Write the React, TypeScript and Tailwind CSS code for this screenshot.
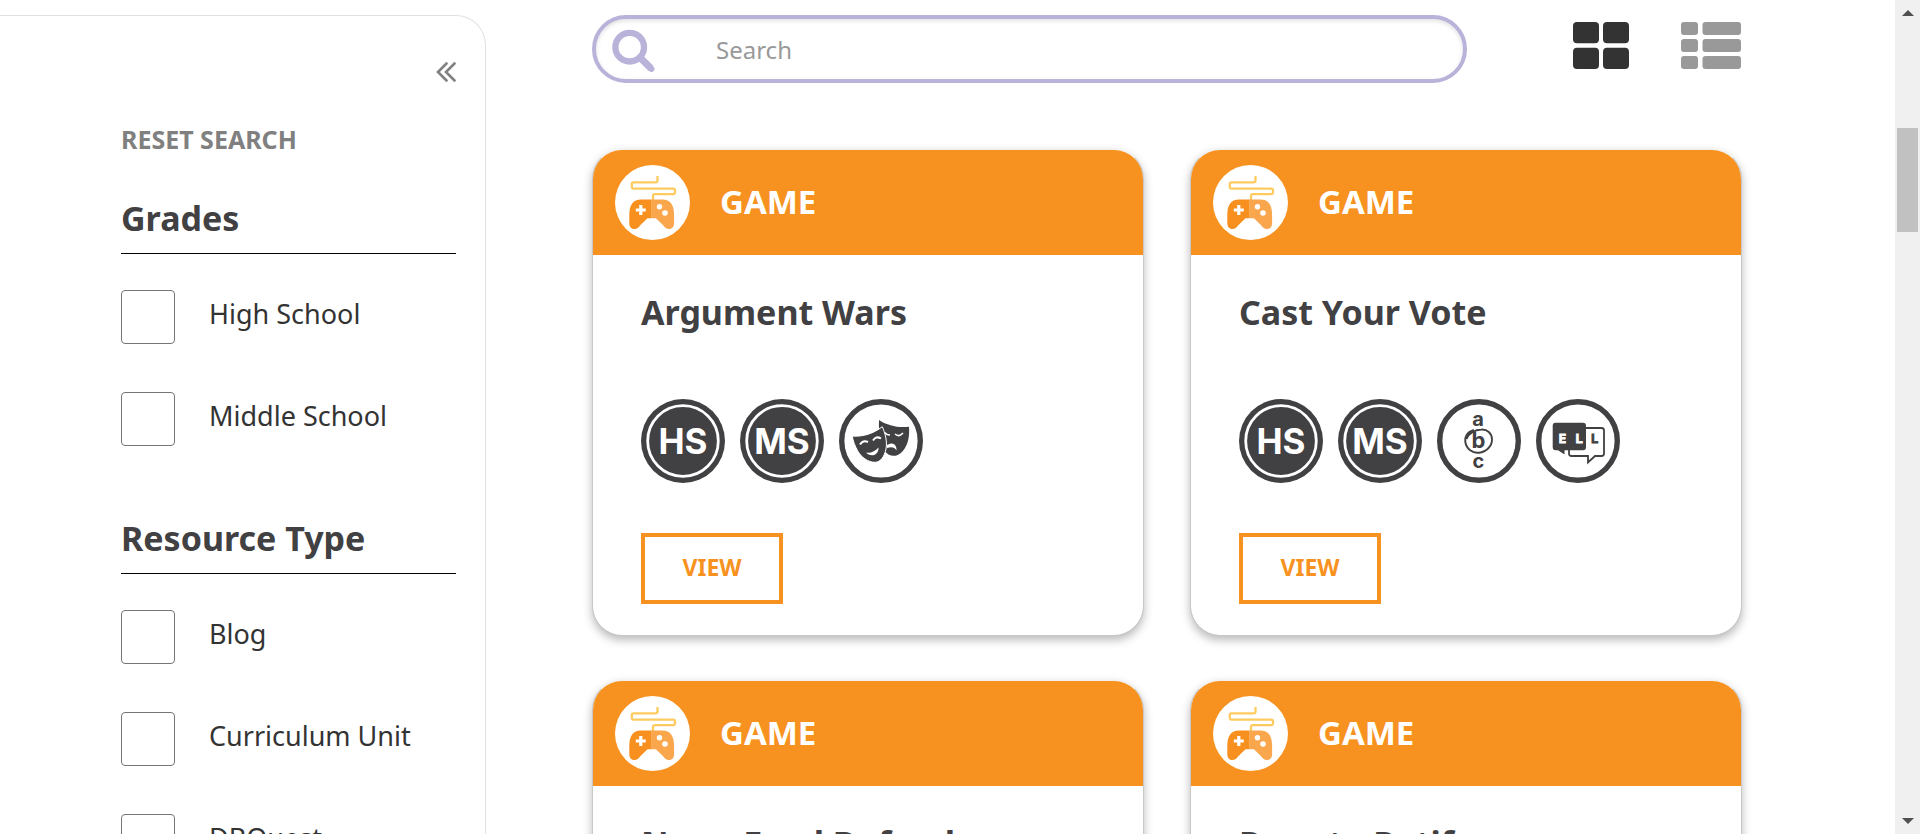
import React from "react";

const TEXT = "font-['Noto_Sans',sans-serif]";

function GameIcon() {
  return (
    <svg viewBox="0 0 75 75" className="size-[75px] shrink-0" aria-hidden="true">
      <circle cx="37.5" cy="37.5" r="37.5" fill="#fff" />
      <path
        d="M42.5 11V15.5Q42.5 17.3 40.5 17.3H18.5Q16.8 17.3 16.8 19V21.7Q16.8 23.6 18.5 23.6H58Q60 23.6 60 25.3V27.3Q60 29.2 58 29.2H40Q38 29.2 38 31V36"
        fill="none"
        stroke="#fdcb5f"
        strokeWidth="2.3"
      />
      <path
        d="M36.7 34.5H26C18 34.5 14.3 40 14.3 50V58C14.3 62.5 17 64 19.5 64C22 64 23.5 62.5 25.5 60L32.5 53.3H36.7Z"
        fill="#f7901f"
      />
      <path
        d="M36.7 34.5H47.4C55.4 34.5 59.1 40 59.1 50V58C59.1 62.5 56.4 64 53.9 64C51.4 64 49.9 62.5 47.9 60L40.9 53.3H36.7Z"
        fill="#f9a64d"
      />
      <path d="M25.8 40V50M20.8 45H30.8" stroke="#fff" strokeWidth="3.2" />
      <circle cx="44.5" cy="41.8" r="2.7" fill="#fff" />
      <circle cx="50" cy="48" r="2.8" fill="#fff" />
    </svg>
  );
}

function LevelBadge({ label }: { label: string }) {
  return (
    <svg viewBox="0 0 84 84" className="size-[84px]" role="img" aria-label={label}>
      <circle cx="42" cy="42" r="42" fill="#414042" />
      <circle cx="42" cy="42" r="35.3" fill="none" stroke="#fff" strokeWidth="2.8" />
      <text
        x="42"
        y="54.5"
        textAnchor="middle"
        fontSize="35"
        fill="#fff"
        className="font-['Inter',sans-serif] font-bold"
      >
        {label}
      </text>
    </svg>
  );
}

function Ring({ label, children }: { label: string; children: React.ReactNode }) {
  return (
    <svg viewBox="0 0 84 84" className="size-[84px]" role="img" aria-label={label}>
      <circle cx="42" cy="42" r="39.3" fill="#fff" stroke="#414042" strokeWidth="5.4" />
      {children}
    </svg>
  );
}

function DramaBadge() {
  return (
    <Ring label="Drama">
      <path
        d="M40 21C49 27 60 29 70 27.7C70.5 34 70 42 66.5 48C63.5 53.5 59 57 54.5 56.8C48 56.5 43 51 41.5 42C40.5 35 39.5 28 40 21Z"
        fill="#414042"
      />
      <path d="M46 33.5Q47 36 51 36" fill="none" stroke="#fff" strokeWidth="1.6" />
      <path d="M56 35Q60 38.5 64 34" fill="none" stroke="#fff" strokeWidth="1.6" />
      <path d="M48 46C54 42 58 46 57.5 51.5C55.5 48.5 53 47.5 48 49Z" fill="#fff" />
      <path
        d="M13.3 37C24 38 34.5 34.5 43.3 27.7C46 34 48.5 42 47 50C45.5 57.5 41.5 63.3 36 63.3C29.5 63.3 22 58.5 18.5 51.5C16 47 14 42 13.3 37Z"
        fill="#414042"
        stroke="#fff"
        strokeWidth="1"
      />
      <path d="M21 45.5Q24 40.5 29 43" fill="none" stroke="#fff" strokeWidth="2" />
      <path d="M34 41.5Q37 36.5 42 39.5" fill="none" stroke="#fff" strokeWidth="2" />
      <path d="M27 53.5C31.5 54.5 36 52.5 39.5 48.5C39.7 53 37 56.3 33 56.3C30.5 56.3 28.5 55.3 27 53.5Z" fill="#fff" />
    </Ring>
  );
}

function AbcBadge() {
  return (
    <Ring label="Vocabulary">
      <g fill="#414042" fontSize="20" textAnchor="middle" className="font-['Inter',sans-serif] font-bold">
        <text x="41" y="26.5">a</text>
        <text x="41.5" y="49" fontSize="22">b</text>
        <text x="41.5" y="69">c</text>
      </g>
      <path
        d="M37 31C30 33 27.5 38 28.3 43C29.5 50 35.5 54.5 42 53.7C49.5 53 55 47 55 40.5C55 34 50 30.2 44.5 30.5C38 30.7 31.5 34.5 29.5 40"
        fill="none"
        stroke="#414042"
        strokeWidth="1.9"
      />
    </Ring>
  );
}

function EllBadge() {
  return (
    <Ring label="English language learners">
      <path
        d="M50 29H65.5Q68 29 68 31.5V54.5Q68 57 65.5 57H59L52 63.5V57H35.5Q33 57 33 54.5V51"
        fill="none"
        stroke="#414042"
        strokeWidth="1.8"
      />
      <path
        d="M19.5 23.7H47Q50 23.7 50 26.7V48.3Q50 51.3 47 51.3H28.5V55.5L22 51.3H19.5Q16.7 51.3 16.7 48.3V26.7Q16.7 23.7 19.5 23.7Z"
        fill="#414042"
      />
      <g fontSize="13" textAnchor="middle" strokeWidth="0.8" className="font-['DejaVu_Sans_Mono',monospace] font-bold">
        <text x="26.5" y="44" fill="#fff" stroke="#fff">E</text>
        <text x="43" y="44" fill="#fff" stroke="#fff">L</text>
        <text x="58.5" y="44" fill="#414042" stroke="#414042">L</text>
      </g>
    </Ring>
  );
}

type Badge = "HS" | "MS" | "drama" | "abc" | "ell";

function BadgeIcon({ kind }: { kind: Badge }) {
  if (kind === "drama") return <DramaBadge />;
  if (kind === "abc") return <AbcBadge />;
  if (kind === "ell") return <EllBadge />;
  return <LevelBadge label={kind} />;
}

const games: { title: string; badges: Badge[] }[] = [
  { title: "Argument Wars", badges: ["HS", "MS", "drama"] },
  { title: "Cast Your Vote", badges: ["HS", "MS", "abc", "ell"] },
  { title: "News Feed Defenders", badges: ["HS", "MS"] },
  { title: "Race to Ratify", badges: ["HS", "MS"] },
];

function GameCard({ title, badges }: { title: string; badges: Badge[] }) {
  return (
    <article className="overflow-hidden rounded-[30px] border border-[#c8c8c8] border-t-transparent bg-white bg-clip-padding shadow-[0_4px_10px_rgba(0,0,0,0.28)]">
      <header className="flex h-[105px] items-center gap-[30px] bg-[#f79220] pl-[22px]">
        <GameIcon />
        <span className="pb-0.5 text-[33px] leading-[46px] font-bold text-white">GAME</span>
      </header>
      <div className="px-12 pt-8 pb-[31px]">
        <h2 className="text-[34px] leading-[50px] font-bold whitespace-nowrap text-[#414042]">{title}</h2>
        <div className="mt-[62px] flex gap-[15px]">
          {badges.map((b) => (
            <BadgeIcon key={b} kind={b} />
          ))}
        </div>
        <a
          href="#view"
          className="mt-[50px] flex h-[71px] w-[142px] items-center justify-center border-4 border-[#f79220] pb-0.5 text-[23px] font-bold text-[#f79220]"
        >
          VIEW
        </a>
      </div>
    </article>
  );
}

function FilterGroup({ title, options }: { title: string; options: string[] }) {
  return (
    <fieldset className="mb-[69px]">
      <legend className="mb-9 w-full border-b border-black pb-3 text-[34px] leading-[46px] font-bold text-[#414042]">
        {title}
      </legend>
      <div className="flex flex-col gap-12">
        {options.map((o) => (
          <label key={o} className="flex h-[54px] items-center gap-[34px] text-[27px] leading-[50px] text-[#333]">
            <input
              type="checkbox"
              className="size-[54px] shrink-0 appearance-none rounded-[4px] border border-[#767676] bg-white checked:bg-[#767676]"
            />
            <span className="pb-1.5 whitespace-nowrap">{o}</span>
          </label>
        ))}
      </div>
    </fieldset>
  );
}

function Sidebar() {
  return (
    <aside className="mt-[15px] w-[486px] shrink-0 rounded-tr-[30px] border-t border-r border-[#e1e1e1] pt-[46px] pr-[29px] pl-[121px]">
      <div className="flex justify-end">
        <button type="button" aria-label="Collapse filters">
          <svg viewBox="0 0 20 20" className="size-5" fill="none" stroke="#808080" strokeWidth="2.6" strokeLinecap="round">
            <path d="M10.5 1.5L2 10L10.5 18.5M18.5 1.5L10 10L18.5 18.5" />
          </svg>
        </button>
      </div>
      <button type="button" className="mt-[39px] block text-[25px] leading-9 font-bold text-[#808080]">
        RESET SEARCH
      </button>
      <div className="mt-[38px]">
        <FilterGroup title="Grades" options={["High School", "Middle School"]} />
        <FilterGroup title="Resource Type" options={["Blog", "Curriculum Unit", "DBQuest"]} />
      </div>
    </aside>
  );
}

function Toolbar() {
  return (
    <div className="flex items-start pr-px">
      <label className="flex h-[68px] flex-1 items-center rounded-full border-4 border-[#b9b3da] pt-0.5 pl-4 shadow-[inset_0_2px_4px_rgba(0,0,0,0.12)]">
        <svg viewBox="0 0 43 43" className="size-[43px] shrink-0" aria-hidden="true">
          <circle cx="17.7" cy="18.2" r="14.3" fill="none" stroke="#b9b3da" strokeWidth="6.3" />
          <path d="M27.5 28L39 39.5" stroke="#b9b3da" strokeWidth="7" />
          <path d="M38.5 39L39.5 40" stroke="#b9b3da" strokeWidth="6" strokeLinecap="round" />
        </svg>
        <input
          type="search"
          aria-label="Search"
          placeholder="Search"
          className="ml-[61px] min-w-0 flex-1 bg-transparent text-2xl text-[#333] outline-none placeholder:text-[#999]"
        />
      </label>
      <button type="button" aria-label="Grid view" className="mt-[7px] ml-[106px]">
        <svg viewBox="0 0 56 47" className="h-[47px] w-14" fill="#333">
          <rect width="26" height="21.3" rx="4" />
          <rect x="30" width="26" height="21.3" rx="4" />
          <rect y="25.7" width="26" height="21.3" rx="4" />
          <rect x="30" y="25.7" width="26" height="21.3" rx="4" />
        </svg>
      </button>
      <button type="button" aria-label="List view" className="mt-[7px] ml-[52px]">
        <svg viewBox="0 0 60 47" className="h-[47px] w-[60px]" fill="#999">
          <rect width="17" height="13" rx="3" />
          <rect x="21.5" width="38.5" height="13" rx="3" />
          <rect y="17" width="17" height="13" rx="3" />
          <rect x="21.5" y="17" width="38.5" height="13" rx="3" />
          <rect y="34" width="17" height="13" rx="3" />
          <rect x="21.5" y="34" width="38.5" height="13" rx="3" />
        </svg>
      </button>
    </div>
  );
}

function Scrollbar() {
  return (
    <div className="flex w-[25px] shrink-0 flex-col items-center bg-[#f0f0f0] pt-[10px] pb-[10px]" aria-hidden="true">
      <svg viewBox="0 0 12 6" className="h-[6px] w-3" fill="#505050">
        <path d="M0 6L6 0L12 6Z" />
      </svg>
      <div className="mt-28 h-[104px] w-[21px] bg-[#c1c1c1]" />
      <svg viewBox="0 0 12 6" className="mt-auto h-[6px] w-3" fill="#505050">
        <path d="M0 0L6 6L12 0Z" />
      </svg>
    </div>
  );
}

export default function App() {
  return (
    <div className={`flex h-screen overflow-hidden bg-white ${TEXT}`}>
      <div className="flex min-w-0 flex-1 overflow-hidden">
        <Sidebar />
        <main className="min-w-0 flex-1 pt-[15px] pr-[153px] pl-[106px]">
          <Toolbar />
          <div className="mt-[66px] grid grid-cols-2 gap-x-[46px] gap-y-[44px]">
            {games.map((g) => (
              <GameCard key={g.title} title={g.title} badges={g.badges} />
            ))}
          </div>
        </main>
      </div>
      <Scrollbar />
    </div>
  );
}
